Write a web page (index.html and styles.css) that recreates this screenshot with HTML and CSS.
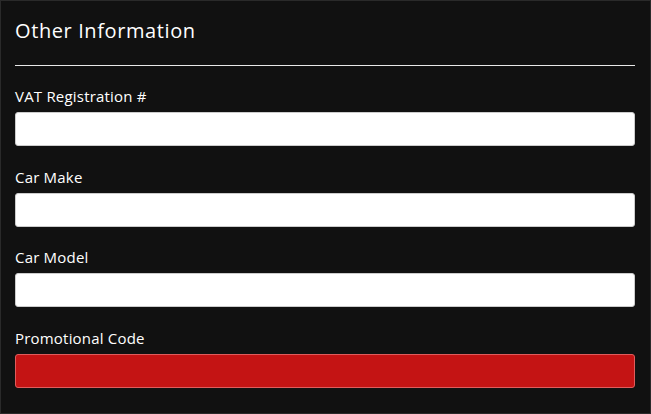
FILE: index.html
```html
<!DOCTYPE html>
<html>
<head>
<meta charset="utf-8">
<link rel="stylesheet" href="styles.css">
</head>
<body>
<div class="panel">
  <h2 class="title">Other Information</h2>
  <hr class="rule">
  <div class="field">
    <label class="label">VAT Registration #</label>
    <input class="input" type="text">
  </div>
  <div class="field">
    <label class="label">Car Make</label>
    <input class="input" type="text">
  </div>
  <div class="field">
    <label class="label">Car Model</label>
    <input class="input" type="text">
  </div>
  <div class="field">
    <label class="label">Promotional Code</label>
    <input class="input input-error" type="text">
  </div>
</div>
</body>
</html>
```
FILE: styles.css
```css
html, body {
  margin: 0;
  padding: 0;
  background: #111111;
}
body {
  width: 651px;
  height: 414px;
  box-sizing: border-box;
  border: 1px solid #2a2a2a;
  font-family: "Open Sans", "Liberation Sans", sans-serif;
  color: #ffffff;
  overflow: hidden;
}
.panel {
  padding: 16px 15px 0 14px;
  display: flex;
  flex-direction: column;
}
.title {
  margin: 0;
  font-size: 20px;
  font-weight: 400;
  line-height: 28px;
  letter-spacing: 0.6px;
}
.rule {
  margin: 20px 0 20px 0;
  border: 0;
  border-top: 1px solid #e8e8e8;
  height: 0;
}
.field {
  display: flex;
  flex-direction: column;
  margin-bottom: 20.6px;
}
.label {
  font-size: 15px;
  line-height: 20px;
  margin-bottom: 6px;
  letter-spacing: 0.2px;
}
.input {
  height: 34px;
  box-sizing: border-box;
  border: 1px solid #cccccc;
  border-radius: 3px;
  background: #ffffff;
  margin: 0;
  padding: 0 10px;
}
.input-error {
  background: #c41414;
  border-color: #e05c5c;
}
```
